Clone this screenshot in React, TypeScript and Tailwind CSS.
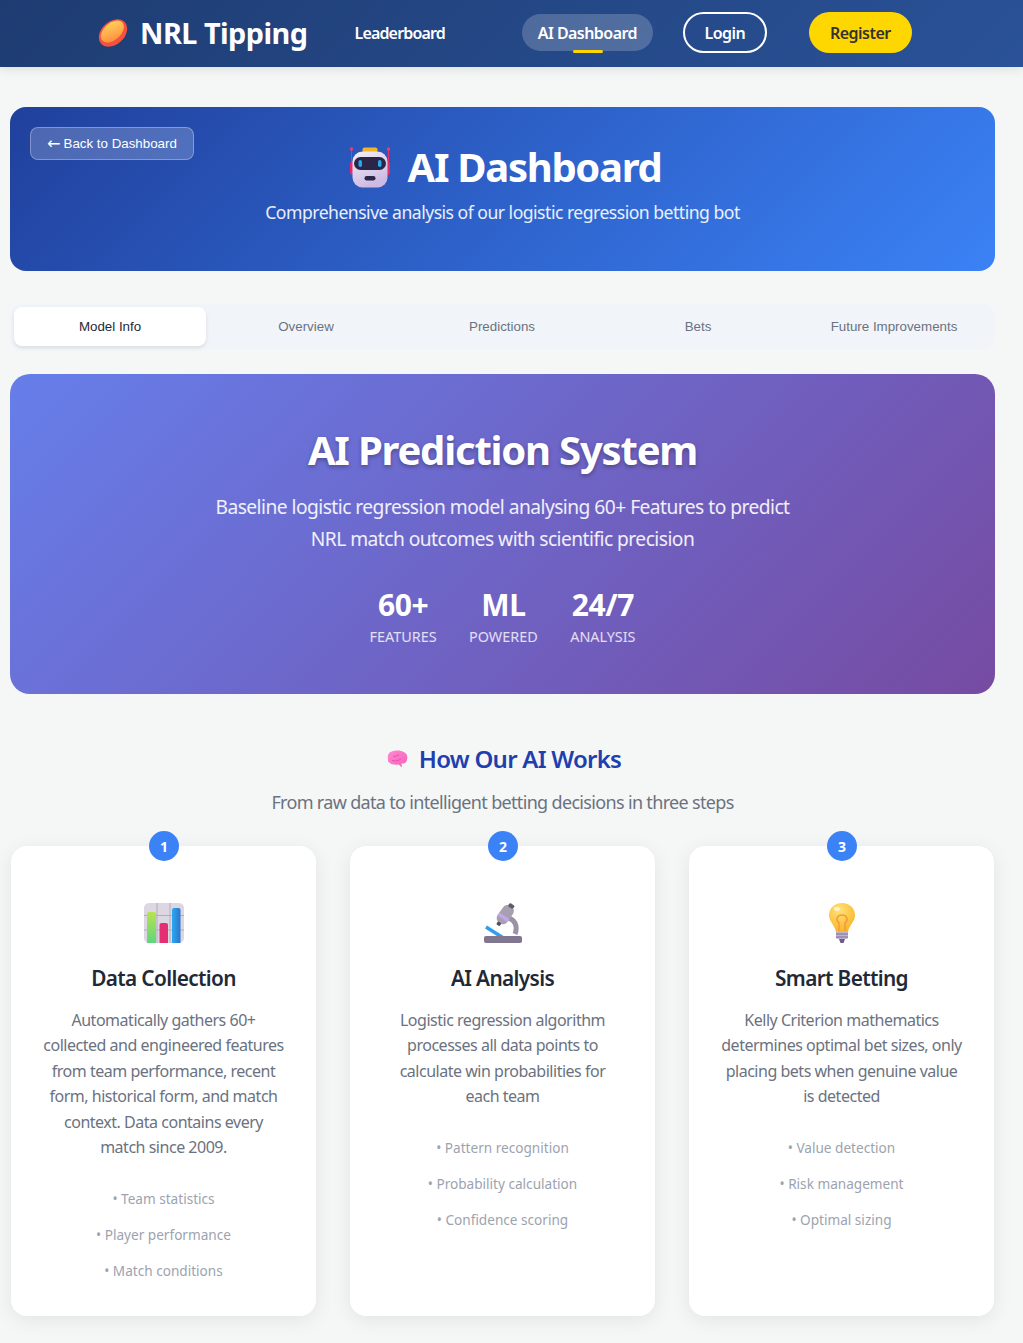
import React from "react";

const sans = "font-['Noto_Sans','Open_Sans',sans-serif]";

const Football = () => (
  <svg width="30" height="30" viewBox="0 0 30 30">
    <defs>
      <linearGradient id="ball" x1="0.8" y1="0" x2="0.2" y2="1">
        <stop offset="0" stopColor="#ffd65c" />
        <stop offset="1" stopColor="#ff8a3c" />
      </linearGradient>
    </defs>
    <g transform="rotate(-42 15 15)">
      <ellipse cx="15" cy="15" rx="16" ry="11.500" fill="#f4523f" />
      <ellipse cx="15.500" cy="13.500" rx="13.500" ry="8.500" fill="url(#ball)" />
    </g>
  </svg>
);

const Robot = () => (
  <svg width="42" height="42" viewBox="0 0 42 42">
    <defs>
      <linearGradient id="robotBody" x1="0" y1="0" x2="0.4" y2="1">
        <stop offset="0" stopColor="#f4f0f4" />
        <stop offset="1" stopColor="#cdb9e4" />
      </linearGradient>
    </defs>
    <path d="M2.500 3v26M39.500 3v26" stroke="#ef2f6b" strokeWidth="1" />
    <circle cx="2.500" cy="3" r="1.700" fill="#f8366f" />
    <circle cx="39.500" cy="3" r="1.700" fill="#f8366f" />
    <rect x="1" y="16" width="4" height="12" rx="1.500" fill="#e42c6a" />
    <rect x="37" y="16" width="4" height="12" rx="1.500" fill="#e42c6a" />
    <rect x="13.500" y="1.500" width="15" height="5" rx="2" fill="#f0b429" />
    <rect x="3.500" y="5.500" width="35" height="36" rx="10" fill="url(#robotBody)" />
    <rect x="5" y="11" width="32" height="13" rx="6.500" fill="#2b2547" />
    <rect x="9.500" y="14" width="3.500" height="7" rx="1.700" fill="#26a8e8" />
    <rect x="29" y="14" width="3.500" height="7" rx="1.700" fill="#26a8e8" />
    <rect x="15.500" y="30" width="11" height="4.500" rx="2.200" fill="#2b2547" />
  </svg>
);

const Brain = () => (
  <svg width="21" height="18" viewBox="0 0 21 18">
    <defs>
      <linearGradient id="brain" x1="0" y1="0" x2="1" y2="1">
        <stop offset="0" stopColor="#ff8bd4" />
        <stop offset="1" stopColor="#f65fb8" />
      </linearGradient>
    </defs>
    <path d="M1 9C0 5 2 2 5 1.500 8 0 14 0 16.500 2 19.500 3 21 6 20 9.500 20 12.500 17 14 14.500 13.500L15 17.500 11.500 14.500C8 15 4 14.500 3 13 1.500 12.500.5 11 1 9z" fill="url(#brain)" />
    <path d="M6 6c2 1 4 0 6-1.500M5 10.500c3 1 7 .5 9-2" stroke="#e64fa8" strokeWidth="1" fill="none" />
  </svg>
);

const Chart = () => (
  <svg width="40" height="40" viewBox="0 0 40 40">
    <defs>
      <linearGradient id="barGreen" x1="0" y1="0" x2="0" y2="1">
        <stop offset="0" stopColor="#b8e34f" />
        <stop offset="1" stopColor="#5ed67f" />
      </linearGradient>
      <linearGradient id="barBlue" x1="0" y1="0" x2="1" y2="0">
        <stop offset="0" stopColor="#29a9f5" />
        <stop offset="1" stopColor="#2f74c8" />
      </linearGradient>
    </defs>
    <rect width="40" height="40" rx="5" fill="#dcd7e2" />
    <path d="M0 12.500h40M0 27h40M13 0v40M26 0v40" stroke="#b3adba" strokeWidth="1" />
    <path d="M3 11a2 2 0 0 1 2-2h5a2 2 0 0 1 2 2v29H3z" fill="url(#barGreen)" />
    <path d="M15.500 22a2 2 0 0 1 2-2h4.500a2 2 0 0 1 2 2v18h-8.500z" fill="#e62f73" />
    <path d="M28 7a2 2 0 0 1 2-2h4.500a2 2 0 0 1 2 2v33H28z" fill="url(#barBlue)" />
  </svg>
);

const Microscope = () => (
  <svg width="40" height="40" viewBox="0 0 40 40">
    <path d="M24 15c8 1 11 8 8 16" stroke="#9a93a3" strokeWidth="5" fill="none" />
    <path d="M3 24l19 12" stroke="#2f9df0" strokeWidth="3.500" />
    <g transform="rotate(35 22 12)">
      <rect x="16" y="1" width="12" height="21" rx="6" fill="#a7a0b0" />
      <rect x="16" y="13" width="12" height="3.500" fill="#c4a6ea" />
      <rect x="19" y="-1" width="6" height="4" rx="1.500" fill="#615b6b" />
      <rect x="20" y="21" width="4" height="3.500" rx="1" fill="#544e5e" />
    </g>
    <rect x="1" y="33" width="38" height="7" rx="2" fill="#80768f" />
  </svg>
);

const Bulb = () => (
  <svg width="28" height="42" viewBox="0 0 28 42">
    <defs>
      <radialGradient id="bulb" cx="0.4" cy="0.25" r="0.8">
        <stop offset="0" stopColor="#ffe27a" />
        <stop offset="1" stopColor="#fbb225" />
      </radialGradient>
    </defs>
    <path d="M14 1C6 1 1 7 1 13c0 7 6 10 7 17h12c1-7 7-10 7-17C27 7 22 1 14 1z" fill="url(#bulb)" />
    <ellipse cx="9" cy="7" rx="3" ry="2" fill="#fff3c4" />
    <path d="M11 29v-8c-4-3-2-8 3-8s7 5 3 8v8" stroke="#f59b3a" strokeWidth="1.500" fill="none" />
    <rect x="8" y="29" width="12" height="8" rx="1.500" fill="#bfb4cc" />
    <path d="M8 32h12M8 35h12" stroke="#7d6e96" strokeWidth="1.200" />
    <path d="M11 37h6l-1.500 4h-3z" fill="#6d5a8c" />
  </svg>
);

const tabs = ["Model Info", "Overview", "Predictions", "Bets", "Future Improvements"];

const stats = [
  { value: "60+", label: "FEATURES" },
  { value: "ML", label: "POWERED" },
  { value: "24/7", label: "ANALYSIS" },
];

const steps = [
  {
    n: 1,
    icon: <Chart />,
    title: "Data Collection",
    lines: [
      "Automatically gathers 60+",
      "collected and engineered features",
      "from team performance, recent",
      "form, historical form, and match",
      "context. Data contains every",
      "match since 2009.",
    ],
    points: ["Team statistics", "Player performance", "Match conditions"],
  },
  {
    n: 2,
    icon: <Microscope />,
    title: "AI Analysis",
    lines: [
      "Logistic regression algorithm",
      "processes all data points to",
      "calculate win probabilities for",
      "each team",
    ],
    points: ["Pattern recognition", "Probability calculation", "Confidence scoring"],
  },
  {
    n: 3,
    icon: <Bulb />,
    title: "Smart Betting",
    lines: [
      "Kelly Criterion mathematics",
      "determines optimal bet sizes, only",
      "placing bets when genuine value",
      "is detected",
    ],
    points: ["Value detection", "Risk management", "Optimal sizing"],
  },
];

export default function App() {
  return (
    <div className={`min-h-[1343px] bg-[#f5f7f7] ${sans}`}>
      {/* NAV */}
      <nav className="flex h-[67px] items-center bg-[linear-gradient(135deg,#1e3c72,#2a5298)] pb-[2px] pl-[98px] shadow-[0_2px_10px_rgba(0,0,0,0.1)]">
        <Football />
        <span className="ml-[12px] mt-[2px] text-[28.8px] font-bold leading-none tracking-[-0.5px] text-white">NRL Tipping</span>
        <a className="ml-[47px] text-[16px] font-semibold tracking-[-0.85px] text-white">Leaderboard</a>
        <a className="relative ml-[77px] flex h-[37px] w-[131px] items-center justify-center rounded-[25px] bg-white/20 text-[16px] font-semibold tracking-[-0.55px] text-white">
          AI Dashboard
          <span className="absolute bottom-[-2px] left-[51px] h-[3px] w-[30px] rounded-sm bg-[#ffd700]" />
        </a>
        <a className="ml-[30px] flex h-[41px] w-[84px] items-center justify-center rounded-[25px] border-2 border-white text-[16px] font-semibold tracking-[-0.5px] text-white">Login</a>
        <a className="ml-[42px] flex h-[41px] w-[103px] items-center justify-center rounded-[25px] bg-[#ffd700] text-[16px] font-semibold tracking-[-0.5px] text-[#333]">Register</a>
      </nav>

      <main className="ml-[10px] w-[985px] pt-[40px]">
        {/* HEADER */}
        <header className="relative flex h-[164px] flex-col items-center rounded-[16px] bg-[linear-gradient(135deg,#20409c,#3b82f6)] pt-[35px] text-white">
          <a className="absolute left-[20px] top-[20px] flex h-[33px] w-[164px] items-center justify-center rounded-[8px] border border-white/30 bg-white/20 font-['Liberation_Sans',sans-serif] text-[13.33px] text-white">
            <span className="mr-[3px] font-['DejaVu_Sans',sans-serif] text-[16px] leading-none">←</span>Back to Dashboard
          </a>
          <h1 className="ml-[5px] flex items-center text-[40px] font-bold leading-[50px] tracking-[-1.3px]">
            <Robot />
            <span className="ml-[17px]">AI Dashboard</span>
          </h1>
          <p className="mt-[7px] text-[17.6px] leading-[26px] tracking-[-0.51px] text-white/90">Comprehensive analysis of our logistic regression betting bot</p>
        </header>

        {/* TABS */}
        <div className="mt-[33px] flex h-[45px] gap-[4px] rounded-[12px] bg-[#f1f5f9] px-[4px] pt-[3px]">
          {tabs.map((t, i) => (
            <button
              key={t}
              className={
                i === 0
                  ? "h-[39px] w-[192px] rounded-[8px] bg-white font-['Liberation_Sans',sans-serif] text-[13.33px] text-[#1f2937] shadow-[0_2px_4px_rgba(0,0,0,0.1)]"
                  : "h-[39px] w-[192px] rounded-[8px] font-['Liberation_Sans',sans-serif] text-[13.33px] text-[#6b7280]"
              }
            >
              {t}
            </button>
          ))}
        </div>

        {/* AI PREDICTION SYSTEM */}
        <section className="mt-[25px] flex h-[320px] flex-col items-center rounded-[20px] bg-[linear-gradient(135deg,#667eea,#764ba2)] pt-[49px] text-white">
          <h2 className="text-[40px] font-bold leading-[54px] tracking-[-1.2px] [text-shadow:0_2px_4px_rgba(0,0,0,0.3)]">AI Prediction System</h2>
          <p className="mt-[14px] text-center text-[19.2px] leading-[32px] tracking-[-0.53px] text-white/90">
            Baseline logistic regression model analysing 60+ Features to predict
            <br />
            NRL match outcomes with scientific precision
          </p>
          <div className="mt-[30px] flex gap-[32.5px]">
            {stats.map((s) => (
              <div key={s.label} className="flex flex-col items-center">
                <span className="text-[30px] font-bold leading-[40px] tracking-[-0.4px]">{s.value}</span>
                <span className="mt-[2px] text-[14.4px] leading-[20px] text-white/80">{s.label}</span>
              </div>
            ))}
          </div>
        </section>

        {/* HOW IT WORKS */}
        <section className="mt-[47px]">
          <h2 className="flex h-[36px] items-center justify-center pl-[3px] text-[24px] font-semibold tracking-[-0.75px] text-[#1e40af]">
            <Brain />
            <span className="ml-[11px]">How Our AI Works</span>
          </h2>
          <p className="mt-[12px] text-center text-[18px] leading-[26px] tracking-[-0.67px] text-[#6b7280]">From raw data to intelligent betting decisions in three steps</p>

          <div className="ml-px mt-[31px] grid grid-cols-[305px_305px_305px] gap-[34px]">
            {steps.map((s) => (
              <div key={s.n} className="relative flex h-[470px] flex-col items-center rounded-[16px] bg-white pt-[55px] shadow-[0_4px_20px_rgba(0,0,0,0.08)]">
                <span className="absolute left-[138px] top-[-15px] flex h-[30px] w-[30px] items-center justify-center rounded-full bg-[#3b82f6] text-[14px] font-bold text-white">{s.n}</span>
                <div className="flex h-[44px] items-center">{s.icon}</div>
                <h3 className="mt-[17.5px] text-[20.8px] font-semibold leading-[30px] tracking-[-0.65px] text-[#1f2937]">{s.title}</h3>
                <p className="mt-[15px] text-center text-[16px] leading-[25.6px] tracking-[-0.48px] text-[#6b7280]">
                  {s.lines.map((l) => (
                    <span key={l} className="block">{l}</span>
                  ))}
                </p>
                <ul className="mt-[20px] flex flex-col items-center text-[13.6px] leading-[36px] text-[#9ca3af]">
                  {s.points.map((p) => (
                    <li key={p}>• {p}</li>
                  ))}
                </ul>
              </div>
            ))}
          </div>
        </section>
      </main>
    </div>
  );
}
